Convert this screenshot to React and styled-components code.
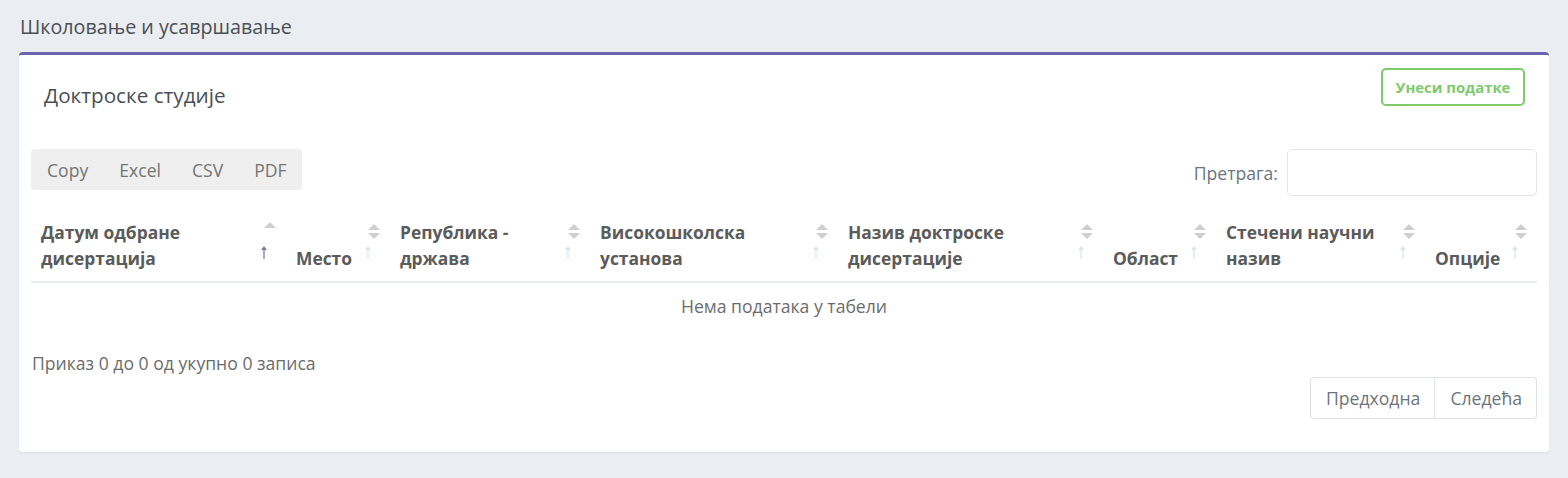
import styled, { createGlobalStyle } from 'styled-components';

const GlobalStyle = createGlobalStyle`
  body {
    margin: 0;
    background: #eaedf1;
    font-family: 'Open Sans', 'Noto Sans', sans-serif;
    color: #495057;
  }
`;

const columns = [
  { title: 'Датум одбране дисертација', width: 255, active: true },
  { title: 'Место', width: 104 },
  { title: 'Република - држава', width: 200 },
  { title: 'Високошколска установа', width: 248 },
  { title: 'Назив доктроске дисертације', width: 265 },
  { title: 'Област', width: 113 },
  { title: 'Стечени научни назив', width: 209 },
  { title: 'Опције', width: 112 },
];

const exportButtons = ['Copy', 'Excel', 'CSV', 'PDF'];

function ArrowUp({ active }) {
  return (
    <SortArrow $active={active} width="6" height="13" viewBox="0 0 6 13">
      <path d="M3 1.2V13M0.8 4.2L3 1.2L5.2 4.2" fill="none" stroke="currentColor" strokeWidth="1.1" />
    </SortArrow>
  );
}

function App() {
  return (
    <Page>
      <GlobalStyle />
      <PageTitle>Школовање и усавршавање</PageTitle>
      <Card>
        <CardHeader>
          <CardTitle>Доктроске студије</CardTitle>
          <AddButton>Унеси податке</AddButton>
        </CardHeader>
        <CardBody>
          <Toolbar>
            <ButtonGroup>
              {exportButtons.map((label) => (
                <ExportButton key={label}>{label}</ExportButton>
              ))}
            </ButtonGroup>
            <SearchLabel>
              Претрага:
              <SearchInput type="search" />
            </SearchLabel>
          </Toolbar>
          <Table>
            <thead>
              <tr>
                {columns.map(({ title, width, active }) => (
                  <Th key={title} $w={width}>
                    {title}
                    <SortUp $active={active} />
                    {!active && <SortDown />}
                    <ArrowUp active={active} />
                  </Th>
                ))}
              </tr>
            </thead>
            <tbody>
              <tr>
                <EmptyCell colSpan={columns.length}>Нема података у табели</EmptyCell>
              </tr>
            </tbody>
          </Table>
          <Info>Приказ 0 до 0 од укупно 0 записа</Info>
          <Pagination>
            <PageButton>Предходна</PageButton>
            <PageButton>Следећа</PageButton>
          </Pagination>
        </CardBody>
      </Card>
    </Page>
  );
}

export default App;

const Page = styled.div`
  padding: 0 19px 25px;
`;

const PageTitle = styled.h1`
  margin: 0;
  height: 52px;
  display: flex;
  align-items: center;
  padding-left: 1px;
  box-sizing: border-box;
  font-size: 19.7px;
  font-weight: 400;
  color: #4a4f55;
`;

const Card = styled.div`
  background: #fff;
  border-top: 3px solid #6d62ad;
  border-radius: 4px;
  box-shadow: 0 1px 2px rgba(0, 0, 0, 0.06);
`;

const CardHeader = styled.div`
  display: flex;
  justify-content: space-between;
  align-items: flex-start;
  padding: 13px 24px 0 25px;
`;

const CardTitle = styled.h2`
  margin: 13px 0 0;
  font-size: 20.7px;
  font-weight: 400;
  color: #4a4f55;
`;

const AddButton = styled.button`
  height: 38px;
  width: 144px;
  border: 2px solid #7dcb6b;
  border-radius: 5px;
  background: #fff;
  color: #7dcb6b;
  font-family: inherit;
  font-size: 14.9px;
  font-weight: 700;
  cursor: pointer;
`;

const CardBody = styled.div`
  padding: 40px 12px 33px;
`;

const Toolbar = styled.div`
  display: flex;
  justify-content: space-between;
  align-items: flex-start;
`;

const ButtonGroup = styled.div`
  display: flex;
  background: #efefef;
  border-radius: 4px;
  height: 41px;
`;

const ExportButton = styled.button`
  border: none;
  background: transparent;
  padding: 0 15px 0 16px;
  font-family: inherit;
  font-size: 17.6px;
  color: #747474;
  cursor: pointer;
`;

const SearchLabel = styled.label`
  display: flex;
  align-items: center;
  gap: 9px;
  font-size: 17.6px;
  color: #6c757d;
`;

const SearchInput = styled.input`
  width: 250px;
  height: 47px;
  box-sizing: border-box;
  border: 1px solid #e3e5e8;
  border-radius: 5px;
  outline: none;
`;

const Table = styled.table`
  width: 100%;
  border-collapse: collapse;
  margin-top: 13px;
  table-layout: fixed;
`;

const Th = styled.th`
  position: relative;
  width: ${({ $w }) => $w}px;
  box-sizing: border-box;
  padding: 10px 30px 10px 10px;
  text-align: left;
  vertical-align: bottom;
  font-size: 17.4px;
  line-height: 26px;
  font-weight: 700;
  color: #5b5b5b;
  border-bottom: 2px solid #e9ecef;
`;

const SortUp = styled.span`
  position: absolute;
  right: 10px;
  bottom: ${({ $active }) => ($active ? 53 : 51)}px;
  width: 0;
  height: 0;
  border-left: 6px solid transparent;
  border-right: 6px solid transparent;
  border-bottom: 6px solid #cfcfcf;
`;

const SortDown = styled.span`
  position: absolute;
  right: 10px;
  bottom: 42px;
  width: 0;
  height: 0;
  border-left: 6px solid transparent;
  border-right: 6px solid transparent;
  border-top: 6px solid #cfcfcf;
`;

const SortArrow = styled.svg`
  position: absolute;
  right: 19px;
  bottom: 22px;
  color: ${({ $active }) => ($active ? '#5d6a8c' : '#d6dee8')};
`;

const EmptyCell = styled.td`
  padding: 12px 10px;
  text-align: center;
  font-size: 17.6px;
  line-height: 22px;
  color: #6c6c6c;
`;

const Info = styled.div`
  margin-top: 22px;
  padding-left: 1px;
  font-size: 17.6px;
  line-height: 24px;
  color: #6c6c6c;
`;

const Pagination = styled.div`
  display: flex;
  justify-content: flex-end;
  margin-top: 2px;
`;

const PageButton = styled.button`
  height: 42px;
  padding: 0 14px 0 15px;
  border: 1px solid #dee2e6;
  background: #fff;
  font-family: inherit;
  font-size: 17.6px;
  color: #6c757d;
  cursor: pointer;

  &:first-child {
    border-radius: 4px 0 0 4px;
  }

  &:last-child {
    border-left: none;
    border-radius: 0 4px 4px 0;
  }
`;
